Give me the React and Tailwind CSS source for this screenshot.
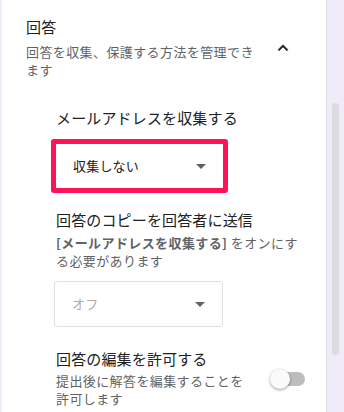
import React from 'react';

const font = { fontFamily: '"Noto Sans CJK JP", "Noto Sans", sans-serif' };

function ArrowDrop({ className }) {
    return (
        <svg width="24" height="24" viewBox="0 0 24 24" className={className}>
            <path d="M7 10l5 5 5-5z" fill="currentColor" />
        </svg>
    );
}

function Toggle() {
    return (
        <div className="relative w-[36px] h-[20px] flex items-center shrink-0">
            <div className="w-[34px] h-[14px] ml-[1px] rounded-full bg-[#bdbdbd]" />
            <div className="absolute left-0 top-0 w-[20px] h-[20px] rounded-full bg-[#fafafa] shadow-[0_1px_3px_rgba(0,0,0,0.4)]" />
        </div>
    );
}

export default function App() {
    return (
        <div className="flex h-[412px] w-[344px] bg-[#f0ebf8] overflow-hidden" style={font}>
            {/* Card */}
            <div className="ml-[2px] w-[324px] bg-white flex flex-col">
                {/* Section header */}
                <div className="flex items-start pl-[24px] pt-[17px]">
                    <div className="w-[234px]">
                        <div className="text-[15px] leading-[20px] text-[#202124] tracking-[0.15px]">回答</div>
                        <p className="mt-[6px] text-[13px] leading-[18px] text-[#5f6368] tracking-[0.4px]">
                            回答を収集、保護する方法を管理できます
                        </p>
                    </div>
                    <svg width="20" height="20" viewBox="0 0 24 24" className="ml-[13px] mt-[21px] text-[#202124]">
                        <path d="M7.41 15.41L12 10.83l4.59 4.58L18 14l-6-6-6 6z" fill="currentColor" stroke="currentColor" strokeWidth="0.6" />
                    </svg>
                </div>

                {/* Settings */}
                <div className="pl-[53px] flex flex-col">
                    <div className="mt-[29px] ml-[1px] text-[15px] leading-[20px] text-[#202124] tracking-[0.15px]">
                        メールアドレスを収集する
                    </div>
                    <div className="mt-[11px] -ml-[4px] w-[177px] h-[54px] border-[5px] border-[#ff1257] rounded-[3px] flex items-center justify-between pl-[17px] pr-[10px]">
                        <span className="text-[13px] text-[#202124] tracking-[0.2px]">収集しない</span>
                        <ArrowDrop className="text-[#5f6368]" />
                    </div>

                    <div className="mt-[17px] ml-[1px] text-[15px] leading-[20px] text-[#202124] tracking-[0.15px]">
                        回答のコピーを回答者に送信
                    </div>
                    <p className="mt-[4px] ml-[1px] w-[243px] text-[13px] leading-[18px] text-[#5f6368] tracking-[0.4px]">
                        <span className="font-bold">[メールアドレスを収集する]</span> をオンにする必要があります
                    </p>
                    <div className="mt-[11px] -ml-[1px] w-[169px] h-[46px] border border-[#e0e0e0] rounded-[3px] flex items-center justify-between pl-[17px] pr-[10px]">
                        <span className="text-[13px] text-[#a8acb1] tracking-[0.2px]">オフ</span>
                        <ArrowDrop className="text-[#5f6368]" />
                    </div>

                    <div className="mt-[22px] ml-[1px] text-[15px] leading-[20px] text-[#202124] tracking-[0.15px]">
                        回答の編集を許可する
                    </div>
                    <div className="mt-[3px] ml-[1px] flex items-start">
                        <p className="w-[196px] text-[13px] leading-[18px] text-[#5f6368] tracking-[0.4px]">
                            提出後に解答を編集することを許可します
                        </p>
                        <div className="ml-[18px] -mt-[3px]">
                            <Toggle />
                        </div>
                    </div>
                </div>
            </div>

            {/* Scrollbar */}
            <div className="w-[18px] border-l border-[#e0dde6] flex justify-center">
                <div className="mt-[103px] w-[7px] h-[252px] rounded-full bg-[#dadce0]" />
            </div>
        </div>
    );
}
